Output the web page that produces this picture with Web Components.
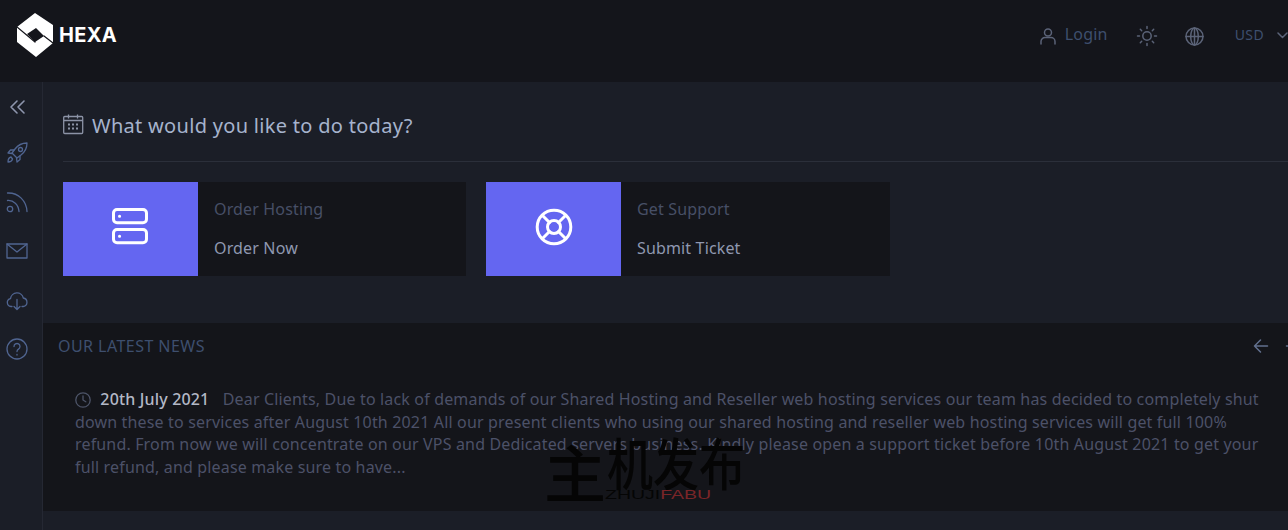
<!DOCTYPE html>
<html lang="en">
<head>
<meta charset="UTF-8">
<title>HEXA</title>
<style>
    html, body { margin: 0; height: 530px; overflow: hidden; background: #1b1e27; }
    body { font-family: "Noto Sans", sans-serif; }
</style>
</head>
<body>

<hexa-app>
    <hexa-header></hexa-header>
    <hexa-sidebar slot="side"></hexa-sidebar>
    <hexa-actions slot="main">
        <hexa-card title="Order Hosting" action="Order Now" icon="server"></hexa-card>
        <hexa-card title="Get Support" action="Submit Ticket" icon="support"></hexa-card>
    </hexa-actions>
    <hexa-news slot="main">Dear Clients, Due to lack of demands of our Shared Hosting and Reseller web hosting services our team has decided to completely shut down these to services after August 10th 2021 All our present clients who using our shared hosting and reseller web hosting services will get full 100% refund. From now we will concentrate on our VPS and Dedicated servers business. Kindly please open a support ticket before 10th August 2021 to get your full refund, and please make sure to have...</hexa-news>
    <hexa-watermark></hexa-watermark>
</hexa-app>

<script>
    function define(name, html, setup) {
        customElements.define(name, class extends HTMLElement {
            constructor() {
                super();
                this.attachShadow({ mode: 'open' });
                this.shadowRoot.innerHTML = html;
                if (setup) setup(this);
            }
        });
    }

    define('hexa-app', `
        <style>
            :host { display: block; position: relative; width: 1288px; height: 530px; overflow: hidden; }
            .body { display: flex; height: 448px; }
            .main { flex: none; width: 1300px; display: flex; flex-direction: column; }
        </style>
        <slot></slot>
        <div class="body">
            <slot name="side"></slot>
            <div class="main"><slot name="main"></slot></div>
        </div>
    `);

    define('hexa-header', `
        <style>
            :host { display: flex; align-items: center; height: 82px; background: #14151b; box-sizing: border-box; padding: 0 0 12px 17px; }
            .logo { display: flex; align-items: center; gap: 2px; color: #fff; font: 700 20px "Inter", sans-serif; letter-spacing: .3px; }
            .right { margin-left: auto; display: flex; align-items: center; color: #3e4f6e; font-size: 16px; }
            svg { display: block; fill: none; stroke: #5b6378; stroke-width: 1.5; stroke-linecap: round; stroke-linejoin: round; }
            .login { display: flex; align-items: center; gap: 8px; margin-right: 28px; letter-spacing: .2px; }
            .login span { margin-top: -3px; }
            .login svg { margin-top: 2px; }
            .sun { margin-right: 27px; margin-top: 2px; }
            .globe { margin-right: 31px; margin-top: 2px; }
            .usd { font-size: 14px; margin-right: 13px; margin-top: -2px; letter-spacing: .4px; }
        </style>
        <div class="logo">
            <svg width="40" height="46" viewBox="0 0 40 46" style="stroke:none">
                <path fill="#fff" fill-rule="evenodd" d="M18 1L36 13V31L19 45L0 30V15ZM19 16L10 22L18 30L27 24Z"/>
                <path stroke="#14151b" stroke-width="1.200" d="M0 15L18 30M27 24L36 31"/>
            </svg>
            <span>HEXA</span>
        </div>
        <div class="right">
            <div class="login">
                <svg width="18" height="18" viewBox="0 0 18 18"><circle cx="9" cy="5.500" r="3.500"/><path d="M2 17v-2.500a4 4 0 0 1 4-4h6a4 4 0 0 1 4 4V17"/></svg>
                <span>Login</span>
            </div>
            <svg class="sun" width="22" height="22" viewBox="0 0 22 22"><circle cx="11" cy="11" r="4.200"/><path d="M11 1.500v2M11 18.500v2M1.500 11h2M18.500 11h2M4.300 4.300l1.400 1.400M16.300 16.300l1.400 1.400M4.300 17.700l1.400-1.400M16.300 5.700l1.400-1.400"/></svg>
            <svg class="globe" width="19" height="19" viewBox="0 0 19 19"><circle cx="9.500" cy="9.500" r="8.500"/><ellipse cx="9.500" cy="9.500" rx="3.800" ry="8.500"/><path d="M1 9.500h17M9.500 1v17"/></svg>
            <span class="usd">USD</span>
            <svg width="11" height="7" viewBox="0 0 11 7"><path d="M1 1l4.500 4.500L10 1"/></svg>
        </div>
    `);

    define('hexa-sidebar', `
        <style>
            :host { flex: none; width: 42px; border-right: 1px solid #252833; box-sizing: content-box; display: flex; flex-direction: column; align-items: center; padding-top: 14px; gap: 27px; }
            svg { display: block; fill: none; stroke: #506591; stroke-width: 1.300; stroke-linecap: round; stroke-linejoin: round; width: 22px; height: 22px; margin-right: 9px; box-sizing: border-box; }
            .first { stroke: #8e96ad; stroke-width: 1.600; margin-bottom: -3px; }
        </style>
        <svg class="first" viewBox="0 0 22 22"><path d="M11 5L5 11l6 6M18 5l-6 6 6 6"/></svg>
        <svg viewBox="0 0 22 22"><path d="M21 1c-5 0-9 2-12 6l-3 4 5 5 4-3c4-3 6-7 6-12z"/><circle cx="14.500" cy="7.500" r="2"/><path d="M8 8H4.500L2 11l4 .5M14 14v3.500L11 20l-.5-4M5 15c-2 .5-3 2-3 5 2 0 4-1 4.500-3z"/></svg>
        <svg viewBox="0 0 22 22"><circle cx="4" cy="18" r="2.700"/><path d="M1.500 9.500c6-.5 11 4 11.500 11M1.500 2c11-.5 19 8 19.500 18.500"/></svg>
        <svg viewBox="0 0 22 22"><rect x="1" y="4" width="20" height="14"/><path d="M1 4l10 8 10-8"/></svg>
        <svg viewBox="0 0 22 22"><path d="M6 17.500H5A4 4 0 0 1 4.500 9.600a6.500 6.500 0 0 1 12.800-.6 4.300 4.300 0 0 1 0 8.500H16"/><path d="M11 10.500V20M8 17.500l3 3 3-3"/></svg>
        <svg viewBox="0 0 22 22"><circle cx="11" cy="11" r="10"/><path d="M8 8.500a3 3 0 1 1 4.500 2.600c-1 .6-1.500 1.200-1.500 2.400"/><path d="M11 16.500v.5"/></svg>
    `);

    define('hexa-actions', `
        <style>
            :host { display: block; box-sizing: border-box; height: 241px; padding: 28px 0 0 20px; }
            h2 { margin: 0; height: 51px; border-bottom: 1px solid #2b2f3a; display: flex; align-items: flex-start; gap: 8px; font-size: 20px; font-weight: 400; line-height: 32px; color: #a6b3cd; box-sizing: content-box; letter-spacing: .3px; }
            svg { fill: none; stroke: #8c93a6; stroke-width: 1.300; margin-top: 4px; flex: none; }
            .cards { display: flex; gap: 20px; margin-top: 20px; }
        </style>
        <h2>
            <svg width="21" height="21" viewBox="0 0 21 21"><rect x=".7" y="2.500" width="19" height="17" rx="1"/><path d="M5.500 .5v4M14.500 .5v4M.7 6.500h19"/><path stroke-width="2" stroke-dasharray="2 2" d="M5 10.500h10M5 14.500h10"/></svg>
            What would you like to do today?
        </h2>
        <div class="cards"><slot></slot></div>
    `);

    const cardIcons = {
        server: `<svg style="margin-right:2px" width="38" height="38" viewBox="0 0 38 38"><rect x="2.500" y="1.500" width="33" height="13.300" rx="3.500"/><rect x="2.500" y="21.500" width="33" height="13.300" rx="3.500"/><path d="M8.500 8.200h.1M8.500 28.200h.1"/></svg>`,
        support: `<svg width="38" height="38" viewBox="0 0 38 38"><circle cx="19" cy="19" r="16.800"/><circle cx="19" cy="19" r="6.500"/><path d="M7.500 7.500l7 7M30.500 7.500l-7 7M7.500 30.500l7-7M30.500 30.500l-7-7"/></svg>`
    };

    define('hexa-card', `
        <style>
            :host { flex: none; display: flex; width: 403px; height: 94px; background: #14151a; }
            :host([icon="support"]) { width: 404px; }
            .icon { flex: none; width: 135px; background: #6466f1; display: flex; align-items: center; justify-content: center; }
            .icon svg { display: block; fill: none; stroke: #fff; stroke-width: 3; stroke-linecap: round; stroke-linejoin: round; margin-bottom: 5px; }
            .text { padding-left: 16px; font-size: 16px; line-height: 24px; letter-spacing: .15px; }
            .title { color: #474f66; margin-top: 15px; }
            .action { color: #8f98b0; margin-top: 15px; }
        </style>
        <div class="icon"></div>
        <div class="text"><div class="title"></div><div class="action"></div></div>
    `, el => {
        const root = el.shadowRoot;
        root.querySelector('.icon').innerHTML = cardIcons[el.getAttribute('icon')];
        root.querySelector('.title').textContent = el.getAttribute('title');
        root.querySelector('.action').textContent = el.getAttribute('action');
    });

    define('hexa-news', `
        <style>
            :host { display: block; height: 188px; background: #14151a; box-sizing: border-box; padding: 10px 0 0 15px; }
            .head { display: flex; align-items: center; height: 26px; width: 1243px; color: #3e4f6e; font-size: 16px; letter-spacing: .45px; }
            .arrows { margin-left: auto; display: flex; gap: 16px; }
            .arrows svg { fill: none; stroke: #62708f; stroke-width: 1.500; stroke-linecap: round; stroke-linejoin: round; display: block; }
            .body { width: 1200px; margin: 29px 0 0 17px; color: #4c5168; font-size: 16px; line-height: 22.700px; letter-spacing: .16px; }
            .date { color: #b3b8c6; margin-right: 9px; font-weight: 500; }
            .clock { display: inline-block; vertical-align: -3px; margin-right: 5px; fill: none; stroke: #4d5468; stroke-width: 1.300; stroke-linecap: round; stroke-linejoin: round; }
        </style>
        <div class="head">
            <span>OUR LATEST NEWS</span>
            <div class="arrows">
                <svg width="16" height="16" viewBox="0 0 16 16"><path d="M14.500 8H1.500M7.500 2L1.500 8l6 6"/></svg>
                <svg width="16" height="16" viewBox="0 0 16 16"><path d="M1.500 8h13M8.500 2l6 6-6 6"/></svg>
            </div>
        </div>
        <div class="body">
            <svg class="clock" width="16" height="16" viewBox="0 0 16 16"><circle cx="8" cy="8" r="7.200"/><path d="M8 3.800V8l2.800 1.800"/></svg>
            <span class="date">20th July 2021</span>
            <slot></slot>
        </div>
    `);

    define('hexa-watermark', `
        <style>
            :host { position: absolute; left: 544px; top: 436px; width: 205px; height: 66px; color: #050505; pointer-events: none; }
            .cn { display: flex; align-items: flex-end; font: 500 46px/62px "Noto Sans CJK SC", sans-serif; white-space: nowrap; }
            .cn span:first-child { font-size: 62px; line-height: 70px; margin-bottom: -6px; margin-right: 1px; }
            .cn span:last-child { transform: scaleY(1.200); transform-origin: bottom; margin-bottom: 2px; }
            .en { position: absolute; left: 61px; top: 52px; font: 400 13px/14px "Liberation Sans", sans-serif; transform: scaleX(1.500); transform-origin: left; white-space: nowrap; }
            .en b { font-weight: 400; color: #7b2528; }
        </style>
        <div class="cn"><span>主</span><span>机发布</span></div>
        <div class="en">ZHUJI<b>FABU</b></div>
    `);
</script>
</body>
</html>
